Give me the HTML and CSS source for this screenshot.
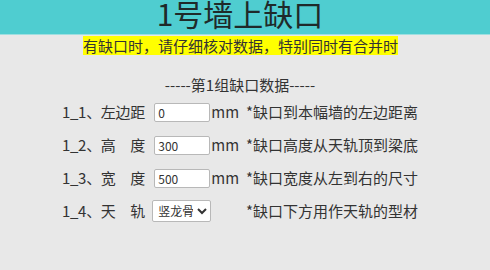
FILE: index.html
```html
<!DOCTYPE html>
<html lang="zh-CN">
<head>
<meta charset="utf-8">
<title>1号墙上缺口</title>
<link rel="stylesheet" href="styles.css">
</head>
<body>
<header class="banner"><h1 class="title">1号墙上缺口</h1></header>
<div class="notice-wrap"><span class="notice">有缺口时，请仔细核对数据，特别同时有合并时</span></div>
<div class="group-title">-----第1组缺口数据-----</div>
<div class="form">
  <div class="row">
    <span class="label">1_1、左边距</span>
    <span class="field"><input class="num" type="text" value="0"></span>
    <span class="unit">mm</span>
    <span class="note">*缺口到本幅墙的左边距离</span>
  </div>
  <div class="row">
    <span class="label">1_2、高　度</span>
    <span class="field"><input class="num" type="text" value="300"></span>
    <span class="unit">mm</span>
    <span class="note">*缺口高度从天轨顶到梁底</span>
  </div>
  <div class="row">
    <span class="label">1_3、宽　度</span>
    <span class="field"><input class="num" type="text" value="500"></span>
    <span class="unit">mm</span>
    <span class="note">*缺口宽度从左到右的尺寸</span>
  </div>
  <div class="row">
    <span class="label">1_4、天　轨</span>
    <span class="field"><select class="pick"><option>竖龙骨</option></select></span>
    <span class="unit"></span>
    <span class="note">*缺口下方用作天轨的型材</span>
  </div>
</div>
</body>
</html>
```

FILE: styles.css
```css
html, body {
  margin: 0;
  padding: 0;
}
body {
  width: 490px;
  height: 270px;
  background: #e8e8e8;
  color: #333;
  font-family: "Noto Sans CJK SC", "Noto Sans", sans-serif;
  font-size: 15px;
  overflow: hidden;
}
.banner {
  height: 35px;
  background: #4fcdd0;
  border-bottom: 1px solid #9fdfe0;
  box-sizing: border-box;
  display: flex;
  justify-content: center;
  align-items: flex-start;
  padding-right: 10px;
}
.title {
  margin: 0;
  font-size: 30px;
  font-weight: normal;
  line-height: 26px;
  color: #1f2a2a;
}
.notice-wrap {
  display: flex;
  justify-content: center;
  padding-top: 1px;
  padding-right: 9px;
}
.notice {
  background: #ffff00;
  color: #333;
  font-size: 15px;
  line-height: 19px;
  height: 19px;
}
.group-title {
  text-align: center;
  padding-right: 10px;
  margin-top: 20px;
  line-height: 20px;
}
.form {
  display: flex;
  flex-direction: column;
  width: 356px;
  margin: 0 0 0 62px;
}
.row {
  display: flex;
  align-items: center;
  height: 33px;
}
.label {
  width: 93px;
  white-space: nowrap;
  letter-spacing: -0.3px;
}
.field {
  width: 56px;
}
.num {
  box-sizing: border-box;
  width: 56px;
  height: 19px;
  margin: 0;
  padding: 0 3px;
  border: 1px solid #b8b8b8;
  border-radius: 2px;
  background: #fff;
  color: #333;
  font-family: "Noto Sans CJK SC", "Noto Sans", sans-serif;
  font-size: 12px;
}
.pick {
  box-sizing: border-box;
  width: 59px;
  height: 22px;
  margin: 0 0 0 -2px;
  padding: 0 1px;
  border: 1px solid #b8b8b8;
  border-radius: 2px;
  background: #fff;
  color: #333;
  font-family: "Noto Sans CJK SC", "Noto Sans", sans-serif;
  font-size: 12px;
}
.unit {
  width: 35px;
  padding-left: 1px;
}
.note {
  white-space: nowrap;
}
```
